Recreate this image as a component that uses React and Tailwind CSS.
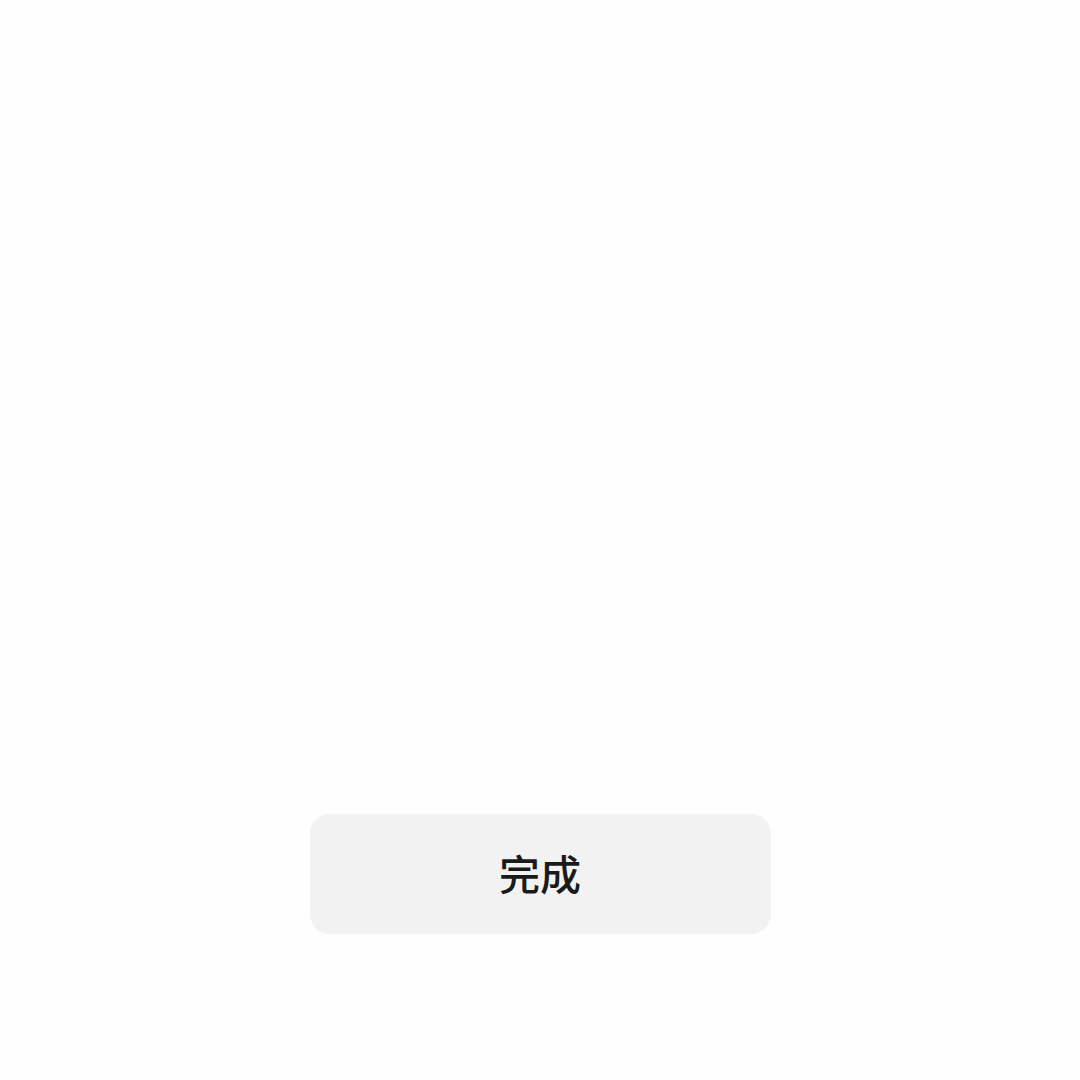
export default function App() {
  return (
    <div className="flex h-[1080px] w-full flex-col items-center justify-end bg-[#fefefe] pb-[146px]">
      <button
        type="button"
        className="flex h-[120px] w-[461px] items-center justify-center rounded-[20px] bg-[#f2f2f2] pb-[2px] text-[41px] font-medium text-[#1a1a1a]"
        style={{ fontFamily: '"Noto Sans CJK SC", "Noto Sans", sans-serif' }}
      >
        完成
      </button>
    </div>
  );
}
